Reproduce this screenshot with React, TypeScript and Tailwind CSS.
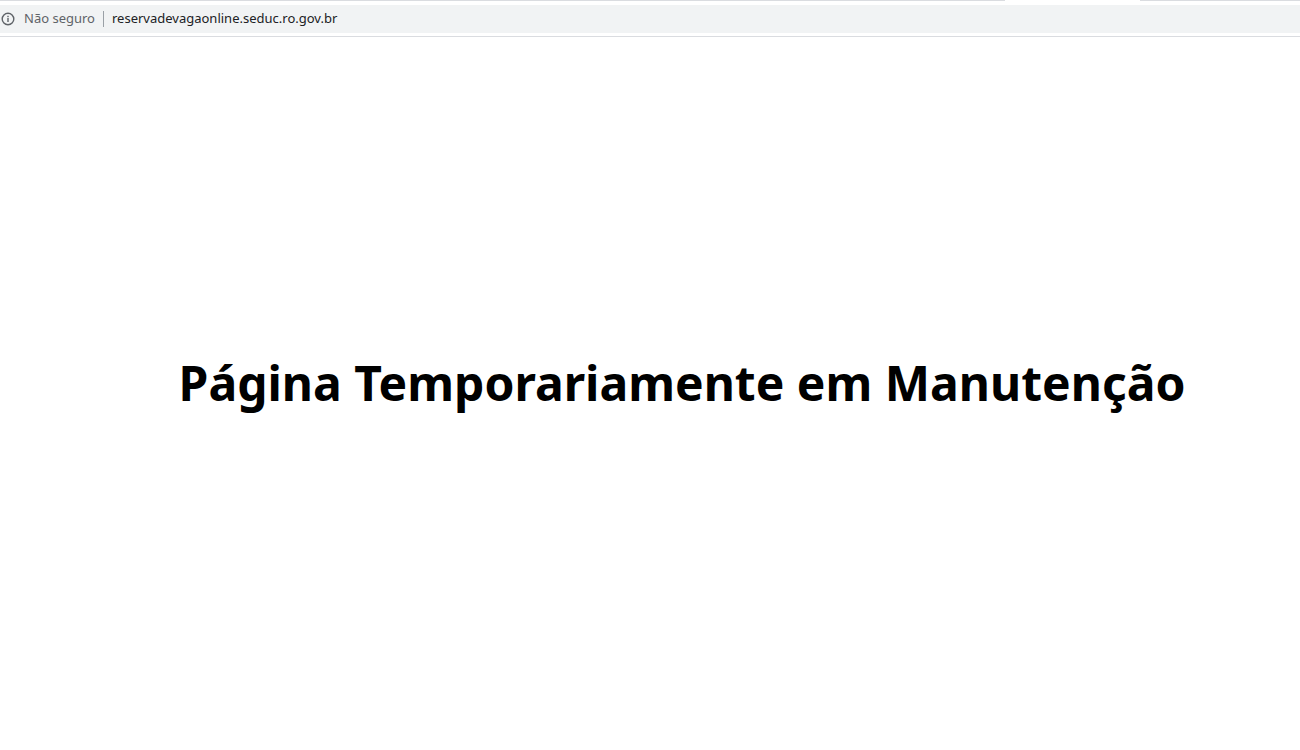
export default function App() {
  return (
    <div className="h-[750px] w-[1300px] bg-white flex flex-col overflow-hidden">
      <div className="h-[5px] flex">
        <div className="w-[1005px] border-t border-[#dadce0]" />
        <div className="w-[135px]" />
        <div className="flex-1 border-t border-[#dadce0]" />
      </div>
      <div className="h-[28px] bg-[#f1f3f4] flex items-center text-[13px] font-[family-name:'Roboto','Liberation_Sans',sans-serif]">
        <svg width="14" height="14" viewBox="0 0 14 14" className="ml-[1px] text-[#5f6368]">
          <circle cx="7" cy="7" r="5.8" fill="none" stroke="currentColor" strokeWidth="1.4" />
          <rect x="6.3" y="6" width="1.4" height="4" fill="currentColor" />
          <rect x="6.3" y="3.8" width="1.4" height="1.4" fill="currentColor" />
        </svg>
        <span className="ml-[9px] text-[#5f6368]">Não seguro</span>
        <span className="mx-[8px] h-[16px] w-px bg-[#9aa0a6]" />
        <span className="text-[#202124]">reservadevagaonline.seduc.ro.gov.br</span>
      </div>
      <div className="h-[4px] bg-white border-b border-[#dadce0]" />
      <div className="flex-1 flex items-start justify-center pl-[64px] pt-[318px]">
        <h1 className="font-[family-name:'Liberation_Serif',serif] font-bold text-[48px] leading-[56px] text-black">
          Página Temporariamente em Manutenção
        </h1>
      </div>
    </div>
  );
}
